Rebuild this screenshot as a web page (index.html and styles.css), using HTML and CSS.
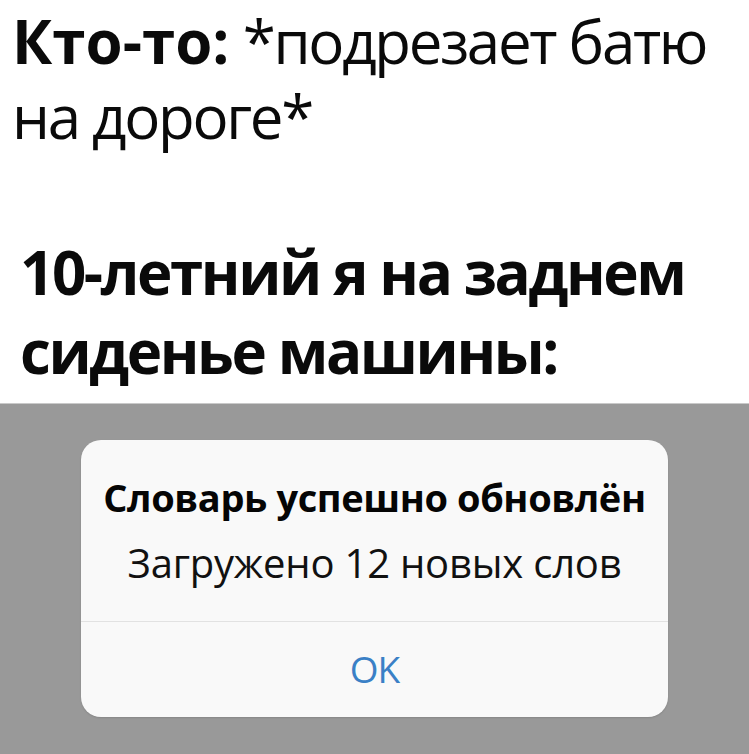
FILE: index.html
```html
<!DOCTYPE html>
<html lang="ru">
<head>
<meta charset="utf-8">
<title>Мем</title>
<link rel="stylesheet" href="styles.css">
</head>
<body>
<section class="caption">
  <p class="line"><b>Кто-то:</b> *подрезает батю<br>на дороге*</p>
  <p class="line bold">10-летний я на заднем<br>сиденье машины:</p>
</section>
<section class="stage">
  <div class="alert">
    <div class="alert-body">
      <div class="alert-title">Словарь успешно обновлён</div>
      <div class="alert-text">Загружено 12 новых слов</div>
    </div>
    <div class="alert-button">OK</div>
  </div>
</section>
</body>
</html>
```
FILE: styles.css
```css
html, body {
  margin: 0;
  padding: 0;
  background: #ffffff;
}
body {
  width: 749px;
  height: 754px;
  overflow: hidden;
  font-family: "Open Sans", "Noto Sans", sans-serif;
  color: #0a0a0a;
}
.caption {
  height: 403px;
  box-sizing: border-box;
  padding: 3.5px 0 0 12px;
}
.line {
  margin: 0 0 79px 0;
  font-size: 60px;
  line-height: 75px;
  font-weight: 400;
  letter-spacing: -2.3px;
  font-stretch: 90%;
  white-space: nowrap;
}
.line b {
  font-weight: 700;
  letter-spacing: 0;
}
.line.bold {
  margin: 0;
  font-weight: 700;
  line-height: 79px;
  letter-spacing: -2.4px;
  padding-left: 8px;
}
.stage {
  height: 351px;
  background: #999999;
  border-top: 1px solid #c9c9c9;
  box-sizing: border-box;
  display: flex;
  justify-content: center;
  padding-top: 36px;
}
.alert {
  width: 587px;
  height: 277px;
  background: #f9f9f9;
  border-radius: 20px;
  box-shadow: 0 1px 2px rgba(0,0,0,0.12);
  display: flex;
  flex-direction: column;
  text-align: center;
}
.alert-body {
  height: 182px;
  box-sizing: border-box;
  padding-top: 35px;
  border-bottom: 1px solid #e2e2e2;
}
.alert-title {
  font-size: 38px;
  line-height: 44px;
  font-weight: 700;
  letter-spacing: -0.4px;
  font-stretch: 90%;
  color: #050505;
  white-space: nowrap;
}
.alert-text {
  margin-top: 19px;
  font-size: 40px;
  line-height: 50px;
  letter-spacing: -0.2px;
  font-stretch: 90%;
  color: #111111;
  white-space: nowrap;
}
.alert-button {
  height: 94px;
  font-size: 37px;
  line-height: 94px;
  letter-spacing: -1px;
  color: #3a80c6;
}
```
